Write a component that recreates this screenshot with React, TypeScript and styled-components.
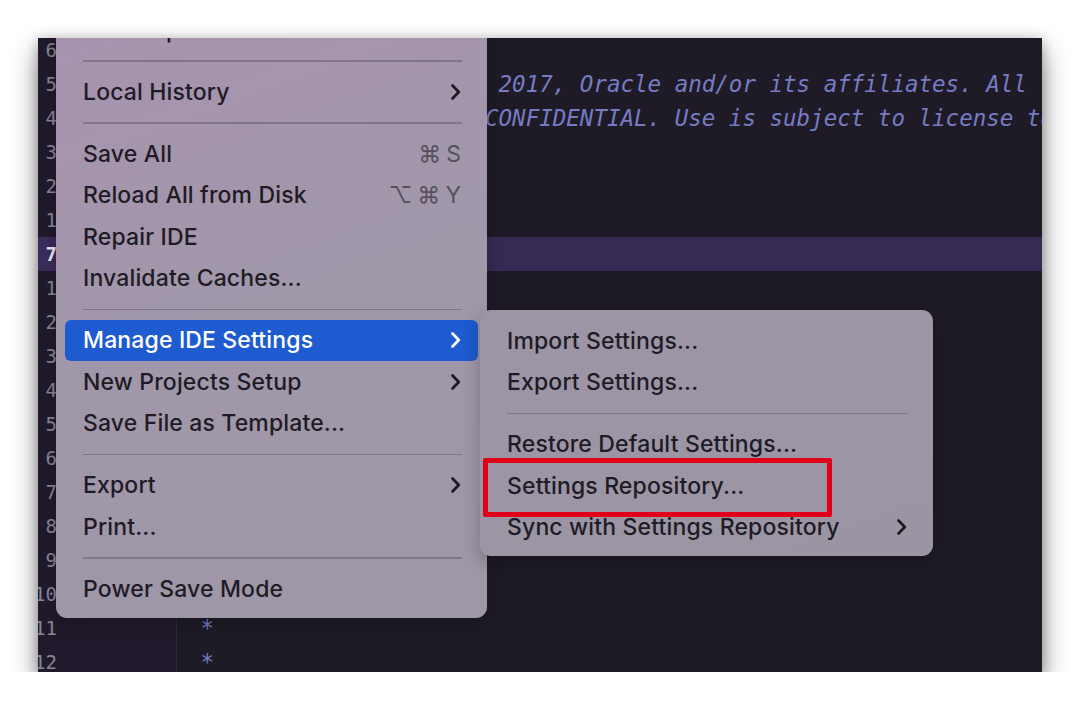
import React from 'react';
import styled, { createGlobalStyle, css } from 'styled-components';

const GlobalStyle = createGlobalStyle`
  html, body {
    margin: 0;
    padding: 0;
    background: #ffffff;
  }
`;

type Entry =
  | { kind: 'item'; label: string; shortcut?: string; submenu?: boolean; active?: boolean; marked?: boolean }
  | { kind: 'sep' };

const FILE_MENU: Entry[] = [
  { kind: 'item', label: 'File Properties', submenu: true },
  { kind: 'sep' },
  { kind: 'item', label: 'Local History', submenu: true },
  { kind: 'sep' },
  { kind: 'item', label: 'Save All', shortcut: '⌘S' },
  { kind: 'item', label: 'Reload All from Disk', shortcut: '⌥⌘Y' },
  { kind: 'item', label: 'Repair IDE' },
  { kind: 'item', label: 'Invalidate Caches...' },
  { kind: 'sep' },
  { kind: 'item', label: 'Manage IDE Settings', submenu: true, active: true },
  { kind: 'item', label: 'New Projects Setup', submenu: true },
  { kind: 'item', label: 'Save File as Template...' },
  { kind: 'sep' },
  { kind: 'item', label: 'Export', submenu: true },
  { kind: 'item', label: 'Print...' },
  { kind: 'sep' },
  { kind: 'item', label: 'Power Save Mode' },
];

const SETTINGS_MENU: Entry[] = [
  { kind: 'item', label: 'Import Settings...' },
  { kind: 'item', label: 'Export Settings...' },
  { kind: 'sep' },
  { kind: 'item', label: 'Restore Default Settings...' },
  { kind: 'item', label: 'Settings Repository...', marked: true },
  { kind: 'item', label: 'Sync with Settings Repository', submenu: true },
];

// relative line numbers, caret on the "7" row
const LINES: { no: string; code: string; current?: boolean }[] = [
  { no: '6', code: '/*' },
  { no: '5', code: ' * Copyright (c) 1997, 2017, Oracle and/or its affiliates. All rights reserved.' },
  { no: '4', code: ' * ORACLE PROPRIETARY/CONFIDENTIAL. Use is subject to license terms.' },
  { no: '3', code: ' *' },
  { no: '2', code: ' */' },
  { no: '1', code: '' },
  { no: '7', code: '', current: true },
  { no: '1', code: '' },
  { no: '2', code: 'import java.io.*;' },
  { no: '3', code: '' },
  { no: '4', code: '/**' },
  { no: '5', code: ' *' },
  { no: '6', code: ' *' },
  { no: '7', code: ' *' },
  { no: '8', code: ' *' },
  { no: '9', code: ' *' },
  { no: '10', code: ' *' },
  { no: '11', code: ' *' },
  { no: '12', code: ' *' },
];

function Chevron({ light }: { light?: boolean }): JSX.Element {
  return (
    <svg width="11" height="18" viewBox="0 0 11 18" fill="none">
      <polyline
        points="2.5,2.5 8.8,9 2.5,15.5"
        stroke={light ? '#ffffff' : '#1d1922'}
        strokeWidth="2.7"
        strokeLinecap="round"
        strokeLinejoin="round"
      />
    </svg>
  );
}

function MenuList({ entries }: { entries: Entry[] }): JSX.Element {
  return (
    <>
      {entries.map((entry, i) =>
        entry.kind === 'sep' ? (
          <Separator key={i} />
        ) : (
          <MenuItem key={i} $active={entry.active} $marked={entry.marked}>
            <span>{entry.label}</span>
            {entry.shortcut && <Shortcut>{entry.shortcut}</Shortcut>}
            {entry.submenu && <Chevron light={entry.active} />}
          </MenuItem>
        ),
      )}
    </>
  );
}

export default function App(): JSX.Element {
  return (
    <>
      <GlobalStyle />
      <Window>
        <Editor>
          <Gutter>
            {LINES.map((line, i) => (
              <LineNo key={i} $current={line.current}>
                {line.no}
              </LineNo>
            ))}
          </Gutter>
          <Code>
            {LINES.map((line, i) => (
              <CodeLine key={i} $current={line.current}>
                {line.code}
              </CodeLine>
            ))}
          </Code>
        </Editor>

        <FileMenu>
          <MenuList entries={FILE_MENU} />
        </FileMenu>

        <SubMenu>
          <MenuList entries={SETTINGS_MENU} />
        </SubMenu>
      </Window>
    </>
  );
}

const Window = styled.div`
  position: relative;
  margin: 38px 0 0 38px;
  width: 1004px;
  height: 634px;
  overflow: hidden;
  background: #1e1b26;
  box-shadow:
    0 14px 26px rgba(0, 0, 0, 0.42),
    0 2px 12px rgba(0, 0, 0, 0.28);
`;

const Editor = styled.div`
  display: flex;
  align-items: flex-start;
  margin-top: -5px;
`;

const Gutter = styled.div`
  display: flex;
  flex-direction: column;
  width: 138px;
  flex-shrink: 0;
  background: #211a2c;
  border-right: 1px solid #2d2839;
  min-height: 700px;
`;

const LineNo = styled.div<{ $current?: boolean }>`
  display: flex;
  flex-shrink: 0;
  justify-content: flex-end;
  align-items: center;
  height: 34px;
  padding-right: 119px;
  font-family: 'DejaVu Sans Mono', 'Liberation Mono', monospace;
  font-size: 19px;
  white-space: nowrap;
  color: #8a8698;

  ${({ $current }) =>
    $current &&
    css`
      background: #3a2d5b;
      color: #ece9f4;
      font-weight: bold;
    `}
`;

const Code = styled.div`
  display: flex;
  flex-direction: column;
  flex: 1;
  min-width: 0;
`;

const CodeLine = styled.div<{ $current?: boolean }>`
  flex-shrink: 0;
  height: 34px;
  line-height: 34px;
  padding-left: 10px;
  font-family: 'DejaVu Sans Mono', 'Liberation Mono', monospace;
  font-style: italic;
  font-size: 22.5px;
  color: #767bc4;
  white-space: pre;
  background: ${({ $current }) => ($current ? '#372a55' : 'transparent')};
`;

const menuPanel = css`
  position: absolute;
  display: flex;
  flex-direction: column;
  border-radius: 11px;
  font-family: Inter, 'DejaVu Sans', sans-serif;
  font-size: 23px;
  font-weight: 500;
  letter-spacing: 0.15px;
  color: #1f1b24;
  box-shadow: 0 6px 18px rgba(0, 0, 0, 0.25);
`;

const FileMenu = styled.div`
  ${menuPanel};
  top: -37px;
  left: 18px;
  width: 431px;
  box-sizing: border-box;
  padding: 8px 9px;
  background: linear-gradient(160deg, #a893b0 0%, #a197aa 45%, #9e97a6 100%);
`;

const SubMenu = styled.div`
  ${menuPanel};
  top: 272px;
  left: 442px;
  width: 453px;
  box-sizing: border-box;
  padding: 10px 9px 8px;
  background: linear-gradient(160deg, #9d95a6 0%, #9b95a3 100%);
`;

const MenuItem = styled.div<{ $active?: boolean; $marked?: boolean }>`
  position: relative;
  display: flex;
  align-items: center;
  justify-content: space-between;
  height: 41.5px;
  padding: 0 17px 0 18px;
  border-radius: 6px;
  white-space: nowrap;

  ${({ $active }) =>
    $active &&
    css`
      background: #1e5bd1;
      color: #ffffff;
    `}

  ${({ $marked }) =>
    $marked &&
    css`
      &::after {
        content: '';
        position: absolute;
        left: -6px;
        top: -7px;
        width: 349px;
        height: 59px;
        box-sizing: border-box;
        border: 5px solid #e1001a;
        border-radius: 2px;
      }
    `}
`;

const Shortcut = styled.span`
  color: #57515e;
  font-weight: 400;
  letter-spacing: 5px;
  margin-right: -5px;
`;

const Separator = styled.div`
  height: 20.5px;
  margin: 0 16px 0 18px;
  display: flex;
  align-items: center;

  &::before {
    content: '';
    flex: 1;
    height: 1.5px;
    background: rgba(70, 60, 80, 0.35);
  }
`;
